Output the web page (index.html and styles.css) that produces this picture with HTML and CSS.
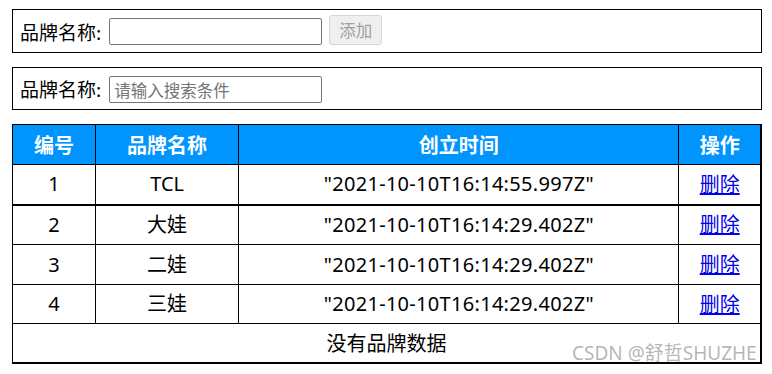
FILE: index.html
```html
<!DOCTYPE html>
<html lang="zh-CN">
<head>
<meta charset="utf-8">
<title>品牌列表</title>
<link rel="stylesheet" href="styles.css">
</head>
<body>
<div class="page">
  <div class="panel">
    <label class="label">品牌名称:</label>
    <input class="field" type="text">
    <button class="btn" disabled>添加</button>
  </div>
  <div class="panel panel-search">
    <label class="label">品牌名称:</label>
    <input class="field" type="text" placeholder="请输入搜索条件">
  </div>
  <table class="grid">
    <colgroup>
      <col class="c1"><col class="c2"><col class="c3"><col class="c4">
    </colgroup>
    <thead>
      <tr><th>编号</th><th>品牌名称</th><th>创立时间</th><th>操作</th></tr>
    </thead>
    <tbody>
      <tr class="first"><td>1</td><td>TCL</td><td class="time">"2021-10-10T16:14:55.997Z"</td><td><a href="#">删除</a></td></tr>
      <tr><td>2</td><td>大娃</td><td class="time">"2021-10-10T16:14:29.402Z"</td><td><a href="#">删除</a></td></tr>
      <tr><td>3</td><td>二娃</td><td class="time">"2021-10-10T16:14:29.402Z"</td><td><a href="#">删除</a></td></tr>
      <tr class="short"><td>4</td><td>三娃</td><td class="time">"2021-10-10T16:14:29.402Z"</td><td><a href="#">删除</a></td></tr>
      <tr class="empty"><td colspan="4">没有品牌数据</td></tr>
    </tbody>
  </table>
  <div class="watermark">CSDN @舒哲SHUZHE</div>
</div>
</body>
</html>
```
FILE: styles.css
```css
html, body {
  margin: 0;
  padding: 0;
  background: #fff;
}
body {
  font-family: "Noto Sans", "Noto Sans CJK SC", sans-serif;
  color: #000;
}
.page {
  position: relative;
  width: 750px;
  padding: 9px 0 0 12px;
  display: flex;
  flex-direction: column;
}
.panel {
  box-sizing: border-box;
  height: 44px;
  border: 1px solid #000;
  display: flex;
  align-items: center;
  padding-left: 7px;
  gap: 7px;
  margin-bottom: 14px;
}
.panel-search {
  height: 43px;
  margin-bottom: 14px;
}
.label {
  font-size: 19px;
  line-height: 1;
  font-family: "Noto Sans CJK SC", sans-serif;
}
.field {
  box-sizing: border-box;
  width: 213px;
  height: 27px;
  margin: 0 0 0 1px;
  border: 1px solid #767676;
  border-radius: 2px;
  padding: 0 4px;
  font-size: 16.5px;
  font-family: "Noto Sans CJK SC", sans-serif;
  background: #fff;
}
.panel-search .field {
  margin-top: 2px;
}
.field::placeholder {
  color: #757575;
}
.btn {
  box-sizing: border-box;
  width: 53px;
  height: 30px;
  margin-left: 0;
  margin-top: -2px;
  border: 1px solid #d6d6d6;
  border-radius: 3px;
  background: #efefef;
  color: #a0a0a0;
  font-size: 16.5px;
  font-family: "Noto Sans CJK SC", sans-serif;
  padding: 0;
}
.grid {
  width: 750px;
  border-collapse: collapse;
  table-layout: fixed;
  font-size: 20px;
  border-right: 2px solid #000;
  border-bottom: 2px solid #000;
}
.c1 { width: 83px; }
.c2 { width: 143px; }
.c3 { width: 440px; }
.c4 { width: 82px; }
.grid th,
.grid td {
  border: 1px solid #000;
  text-align: center;
  padding: 0;
  height: 40px;
  box-sizing: border-box;
  line-height: 24px;
}
.grid tr.short td,
.grid tr.empty td {
  height: 39px;
}
.grid th {
  background: #0094ff;
  color: #fff;
  font-weight: bold;
  font-family: "Noto Sans CJK SC", sans-serif;
}
.grid td.time {
  letter-spacing: 0.3px;
}
.grid tr.first td {
  border-bottom: 2px solid #000;
}
.grid a {
  color: #0000ee;
  text-decoration: underline;
  font-family: "Noto Sans CJK SC", sans-serif;
}
.grid tr.empty td {
  font-family: "Noto Sans CJK SC", sans-serif;
}
.watermark {
  position: absolute;
  left: 572px;
  top: 338px;
  font-size: 19px;
  color: rgba(150, 150, 150, 0.7);
  font-family: "Noto Sans", "Noto Sans CJK SC", sans-serif;
  white-space: nowrap;
}
```
